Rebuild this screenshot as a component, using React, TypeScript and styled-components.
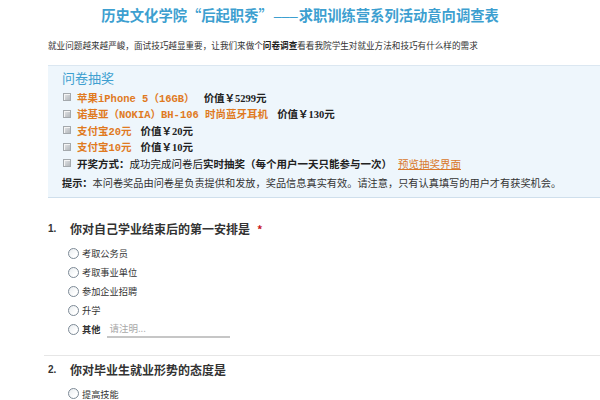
import React from 'react'
import styled, { createGlobalStyle } from 'styled-components'

//=> Global
const Global = createGlobalStyle`
	body {
		margin: 0;
		background: #fff;
		font-family: 'Noto Sans CJK SC', 'Noto Sans', sans-serif;
		color: #333;
	}
`

const prizes = [
	{ name: '苹果iPhone 5（16GB）', value: '价值￥5299元' },
	{ name: '诺基亚（NOKIA）BH-106 时尚蓝牙耳机', value: '价值￥130元' },
	{ name: '支付宝20元', value: '价值￥20元' },
	{ name: '支付宝10元', value: '价值￥10元' }
]

const q1Options = ['考取公务员', '考取事业单位', '参加企业招聘', '升学']

//=> DOM
export default function App() {
	return (
		<Page>
			<Global />
			<Title>
				历史文化学院“后起职秀”<Dash>–––</Dash>求职训练营系列活动意向调查表
			</Title>
			<Intro>
				就业问题越来越严峻，面试技巧越显重要，让我们来做个<b>问卷调查</b>
				看看我院学生对就业方法和技巧有什么样的需求
			</Intro>

			<Lottery>
				<LotteryHead>问卷抽奖</LotteryHead>
				<PrizeList>
					{prizes.map(p => (
						<PrizeRow key={p.name}>
							<Bullet />
							<Orange>{p.name}</Orange>
							<Value>{p.value}</Value>
						</PrizeRow>
					))}
					<PrizeRow>
						<Bullet />
						<b>开奖方式：</b>
						<span>成功完成问卷后</span>
						<b>实时抽奖（每个用户一天只能参与一次）</b>
						<Preview href='#'>预览抽奖界面</Preview>
					</PrizeRow>
				</PrizeList>
				<Hint>
					<b>提示：</b>
					本问卷奖品由问卷星负责提供和发放，奖品信息真实有效。请注意，只有认真填写的用户才有获奖机会。
				</Hint>
			</Lottery>

			<Question>
				<QTitle>
					<QNum>1.</QNum>
					你对自己学业结束后的第一安排是
					<Required>*</Required>
				</QTitle>
				<Options>
					{q1Options.map(o => (
						<Option key={o}>
							<Radio />
							{o}
						</Option>
					))}
					<Option>
						<Radio />
						<b>其他</b>
						<OtherInput placeholder='请注明...' />
					</Option>
				</Options>
			</Question>

			<Question $divider>
				<QTitle>
					<QNum>2.</QNum>
					你对毕业生就业形势的态度是
				</QTitle>
				<Options>
					<Option>
						<Radio />
						提高技能
					</Option>
				</Options>
			</Question>
		</Page>
	)
}

//=> Style
const Page = styled.div`
	width: 600px;
	height: 400px;
	overflow: hidden;
`

const Title = styled.h1`
	margin: 0;
	padding-top: 6px;
	text-align: center;
	font-size: 14.3px;
	line-height: 18px;
	font-weight: bold;
	color: #3d9fd0;
	white-space: nowrap;
`

const Dash = styled.span`
	font-family: 'Liberation Sans', sans-serif;
	font-weight: normal;
	margin: 0 1px;
`

const Intro = styled.p`
	margin: 14px 0 0 48px;
	font-size: 8.6px;
	line-height: 12px;
	color: #333;
	white-space: nowrap;
	b {
		color: #222;
	}
`

const Lottery = styled.div`
	margin: 14px 0 0 48px;
	padding: 3px 0 6px 14px;
	background: #eef6fc;
	border-top: 1px solid #dbe7f1;
	border-bottom: 1px solid #cfdfec;
	font-size: 10.5px;
	color: #222;
`

const LotteryHead = styled.div`
	font-size: 13px;
	line-height: 18px;
	color: #3d9fd0;
`

const PrizeList = styled.div`
	margin-top: 2px;
`

const PrizeRow = styled.div`
	display: flex;
	align-items: center;
	height: 16.5px;
	white-space: nowrap;
	b {
		font-weight: bold;
	}
`

const Bullet = styled.span`
	width: 6px;
	height: 6px;
	margin: 0 6px 0 1px;
	border: 1px solid #a4a9ad;
	background: linear-gradient(135deg, #e4e6e8 0%, #b4b8bc 100%);
	box-shadow: inset 1px 1px 0 #f4f4f4;
`

const Orange = styled.span`
	font-family: 'Liberation Mono', 'Noto Sans CJK SC', monospace;
	font-weight: bold;
	color: #e07a1f;
	margin-right: 9px;
`

const Value = styled.span`
	font-family: 'Liberation Serif', 'Noto Sans CJK SC', serif;
	font-weight: bold;
	color: #222;
`

const Preview = styled.a`
	margin-left: 6px;
	color: #d9782b;
	text-decoration: underline;
`

const Hint = styled.div`
	margin-top: 3.5px;
	font-size: 10.2px;
	line-height: 16px;
	white-space: nowrap;
	color: #333;
	b {
		color: #222;
	}
`

const Question = styled.div<{ $divider?: boolean }>`
	margin-left: 44px;
	padding-left: 4px;
	margin-top: ${p => (p.$divider ? '16px' : '22px')};
	${p =>
		p.$divider &&
		`
		border-top: 1px solid #e6e6e6;
		padding-top: 5px;
	`}
`

const QTitle = styled.div`
	display: flex;
	align-items: center;
	font-size: 12px;
	line-height: 18px;
	font-weight: bold;
	color: #333;
	white-space: nowrap;
`

const QNum = styled.span`
	width: 22px;
	font-family: 'Liberation Sans', sans-serif;
	font-size: 10px;
`

const Required = styled.span`
	margin-left: 7px;
	color: #c8161d;
	font-size: 11px;
`

const Options = styled.div`
	margin-top: 5.5px;
	padding-left: 20px;
`

const Option = styled.div`
	display: flex;
	align-items: center;
	height: 19px;
	font-size: 9.2px;
	color: #333;
	white-space: nowrap;
	b {
		font-weight: bold;
	}
`

const Radio = styled.span`
	width: 9px;
	height: 9px;
	margin-right: 3px;
	border: 1px solid #7d8a96;
	border-radius: 50%;
	background: linear-gradient(135deg, #e8ecef 0%, #ffffff 70%);
`

const OtherInput = styled.input`
	width: 119px;
	height: 15px;
	margin-left: 7px;
	padding: 0 2px;
	border: none;
	border-bottom: 2px solid #c6c6c6;
	outline: none;
	background: transparent;
	font-family: 'Noto Sans CJK SC', sans-serif;
	font-size: 9.5px;
	&::placeholder {
		color: #a8a8a8;
	}
`
